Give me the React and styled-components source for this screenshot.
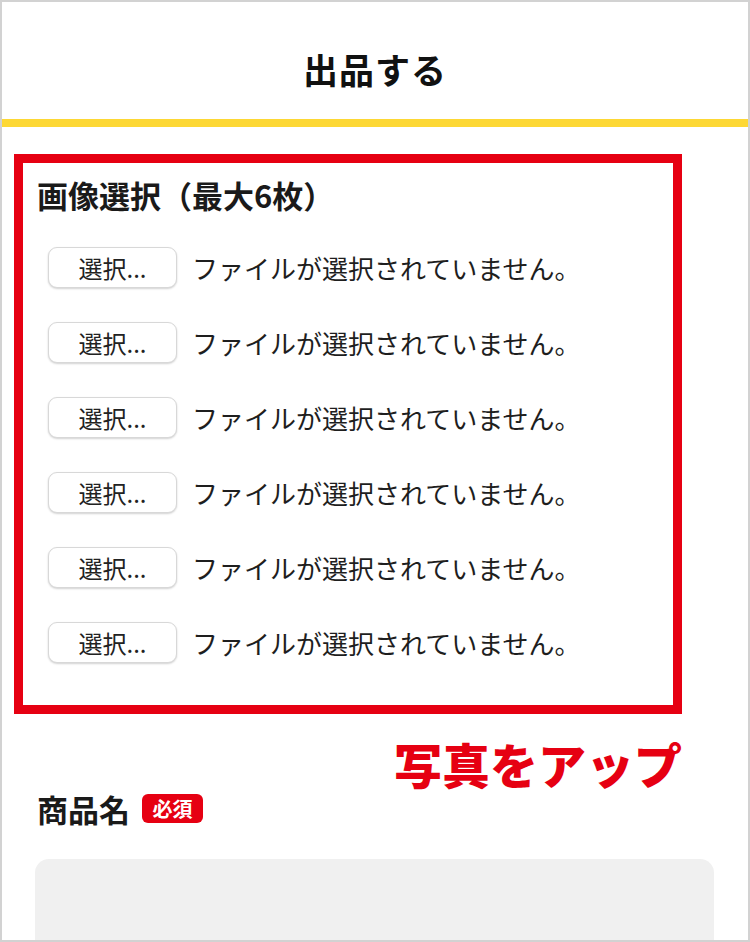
import React from 'react'
import styled, { createGlobalStyle } from 'styled-components'

const GlobalStyle = createGlobalStyle`
  html, body {
    margin: 0;
    padding: 0;
    background: #fff;
  }
  body {
    font-family: "Noto Sans CJK JP", "Noto Sans", sans-serif;
    color: #1a1a1a;
  }
`

const Frame = styled.div`
  width: 750px;
  height: 942px;
  box-sizing: border-box;
  border: 2px solid #d2d2d2;
  overflow: hidden;
  background: #fff;
`

const Header = styled.header`
  height: 117px;
  box-sizing: border-box;
  padding-top: 16px;
  display: flex;
  align-items: center;
  justify-content: center;
`

const HeaderTitle = styled.h1`
  margin: 0;
  font-size: 35px;
  font-weight: 700;
  color: #111;
  letter-spacing: 1px;
`

const YellowBar = styled.div`
  height: 8px;
  background: #fdd835;
`

const Main = styled.main`
  padding: 27px 0 0 12px;
`

const Highlight = styled.section`
  width: 668px;
  height: 560px;
  box-sizing: border-box;
  border: 9px solid #e60012;
  padding: 13px 0 0 14px;
`

const SectionTitle = styled.h2`
  margin: 0;
  font-size: 31px;
  font-weight: 700;
  line-height: 38px;
  color: #1a1a1a;
`

const FileList = styled.div`
  display: flex;
  flex-direction: column;
  gap: 34px;
  margin-top: 33px;
  padding-left: 11px;
`

const FileRow = styled.div`
  display: flex;
  align-items: center;
  gap: 15px;
`

const PickButton = styled.button`
  width: 129px;
  height: 41px;
  box-sizing: border-box;
  border: 1px solid #d8d8d8;
  border-radius: 9px;
  background: #fff;
  box-shadow: 0 1px 2px rgba(0, 0, 0, 0.18);
  font-family: inherit;
  font-size: 24px;
  color: #222;
  padding: 0;
`

const FileStatus = styled.span`
  font-size: 26px;
  color: #1e1e1e;
`

const Callout = styled.div`
  width: 668px;
  text-align: right;
  margin-top: 19px;
  font-size: 48px;
  font-weight: 900;
  line-height: 60px;
  color: #e60012;
`

const FieldLabel = styled.div`
  display: flex;
  align-items: center;
  gap: 12px;
  margin: -7px 0 0 35px;
`

const LabelText = styled.span`
  font-size: 31px;
  font-weight: 700;
  color: #1a1a1a;
`

const Badge = styled.span`
  width: 61px;
  height: 29px;
  border-radius: 6px;
  background: #e60012;
  color: #fff;
  font-size: 20px;
  font-weight: 700;
  display: flex;
  align-items: center;
  justify-content: center;
`

const TextField = styled.div`
  width: 679px;
  height: 100px;
  margin: 28px 0 0 33px;
  border-radius: 14px;
  background: #f0f0f0;
`

export default function App() {
  const slots = [1, 2, 3, 4, 5, 6]
  return (
    <>
      <GlobalStyle />
      <Frame>
        <Header>
          <HeaderTitle>出品する</HeaderTitle>
        </Header>
        <YellowBar />
        <Main>
          <Highlight>
            <SectionTitle>画像選択（最大6枚）</SectionTitle>
            <FileList>
              {slots.map((n) => (
                <FileRow key={n}>
                  <PickButton>選択...</PickButton>
                  <FileStatus>ファイルが選択されていません。</FileStatus>
                </FileRow>
              ))}
            </FileList>
          </Highlight>
          <Callout>写真をアップ</Callout>
        </Main>
        <FieldLabel>
          <LabelText>商品名</LabelText>
          <Badge>必須</Badge>
        </FieldLabel>
        <TextField />
      </Frame>
    </>
  )
}
